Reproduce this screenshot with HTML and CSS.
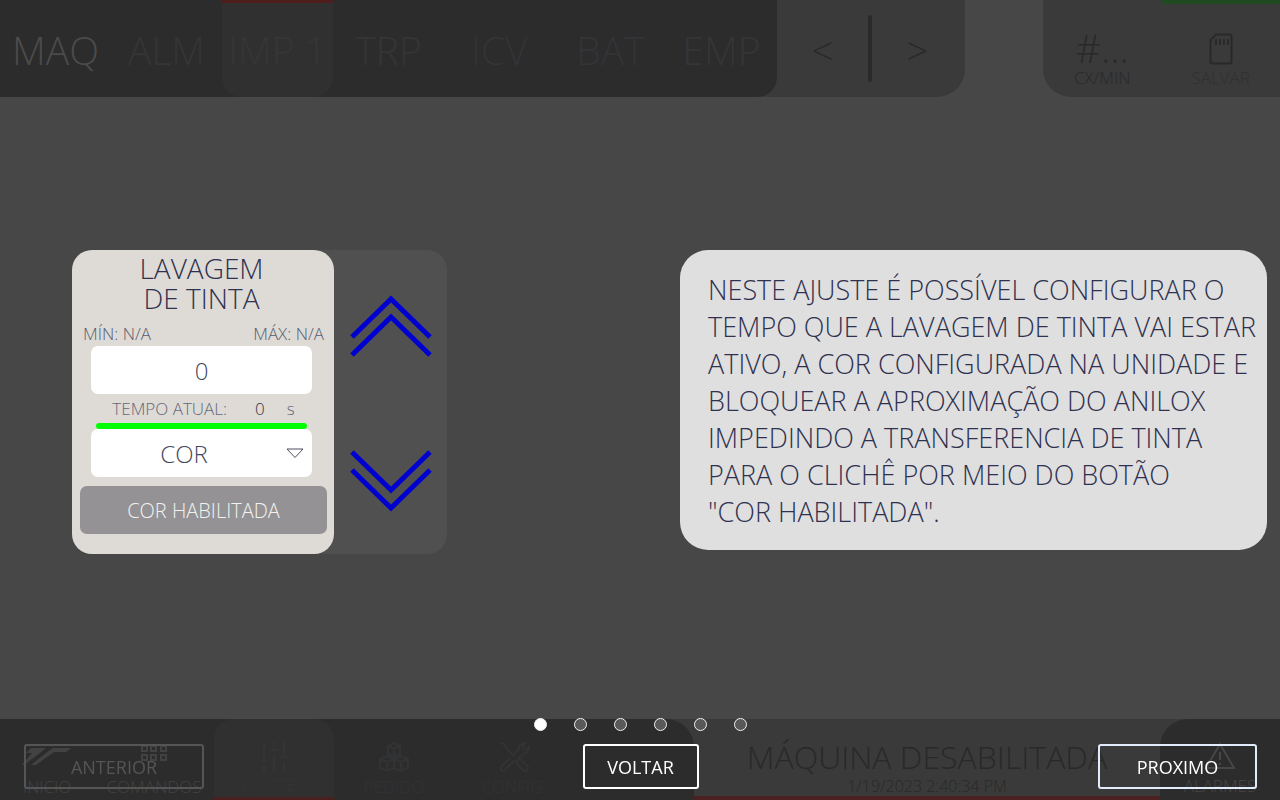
FILE: index.html
```html
<!DOCTYPE html>
<html lang="pt-BR">
<head>
<meta charset="utf-8">
<title>Lavagem de tinta</title>
<link rel="stylesheet" href="styles.css">
</head>
<body>
<div class="app">
  <header class="top">
    <nav class="tabs-wrap">
      <div class="tabs">
        <button class="tab tab-first" type="button">MAQ</button>
        <button class="tab" type="button">ALM</button>
        <button class="tab tab-active" type="button">IMP 1</button>
        <button class="tab" type="button">TRP</button>
        <button class="tab tab-blue" type="button">ICV</button>
        <button class="tab tab-blue" type="button">BAT</button>
        <button class="tab" type="button">EMP</button>
      </div>
      <div class="pager">
        <button class="pager-btn" type="button">&lt;</button>
        <span class="pager-bar"></span>
        <button class="pager-btn" type="button">&gt;</button>
      </div>
    </nav>
    <div class="status">
      <div class="stat"><span class="stat-value">#...</span><span class="stat-label">CX/MIN</span></div>
      <button class="stat stat-save" type="button">
        <svg class="sd" viewBox="0 0 24 32"><path d="M7 1.5H20.500Q22.500 1.500 22.500 3.500V28.500Q22.500 30.500 20.500 30.500H3.500Q1.500 30.500 1.500 28.500V7Z"/><path d="M7 6v6M11 6v6M15 6v6M19 6v6"/></svg>
        <span class="stat-label">SALVAR</span>
      </button>
    </div>
  </header>

  <main class="main">
    <section class="control">
      <div class="card">
        <div class="settings">
          <h1 class="card-title">LAVAGEM<br>DE TINTA</h1>
          <div class="limits"><span>MÍN: N/A</span><span>MÁX: N/A</span></div>
          <input class="field" type="text" value="0" aria-label="Tempo de lavagem">
          <div class="current"><span>TEMPO ATUAL:</span><span class="current-value">0</span><span>s</span></div>
          <div class="progress"></div>
          <div class="select-wrap">
            <select class="field select" aria-label="Cor"><option>COR</option></select>
            <svg class="caret" viewBox="0 0 18 11"><path d="M1 1H17L9 9.500Z"/></svg>
          </div>
        </div>
        <button class="enable" type="button">COR HABILITADA</button>
      </div>
      <div class="steppers">
        <button class="step" type="button" aria-label="Aumentar"><svg viewBox="0 0 82 62"><path d="M2 42L41 4L80 42M2 60L41 22L80 60"/></svg></button>
        <button class="step" type="button" aria-label="Diminuir"><svg viewBox="0 0 82 62"><path d="M2 2L41 40L80 2M2 20L41 58L80 20"/></svg></button>
      </div>
    </section>
    <p class="help">NESTE AJUSTE É POSSÍVEL CONFIGURAR O TEMPO QUE A LAVAGEM DE TINTA VAI ESTAR ATIVO, A COR CONFIGURADA NA UNIDADE E BLOQUEAR A APROXIMAÇÃO DO ANILOX IMPEDINDO A TRANSFERENCIA DE TINTA PARA O CLICHÊ POR MEIO DO BOTÃO <br>"COR HABILITADA".</p>
  </main>

  <footer class="bottom">
    <nav class="menu">
      <a class="item item-lit" href="#"><svg class="logo" viewBox="0 0 50 20"><path d="M9 2H24L18 7L2 19H0L10 7H4ZM31 2H49L44 6H32L14 19H9L24 7Z"/></svg><span>INICIO</span></a>
      <a class="item item-lit" href="#"><svg class="icon" viewBox="0 0 32 32"><path d="M4 5h5v5h-5zM13 5h5v5h-5zM23 5h5v5h-5zM4 14h5v5h-5zM13 14h5v5h-5zM23 14h5v5h-5z"/></svg><span>COMANDOS</span></a>
      <a class="item item-active" href="#"><svg class="icon" viewBox="0 0 32 32"><path d="M6 1v18M6 24v7M16 1v8M16 14v17M26 1v15M26 21v10M2 19h8M12 9h8M22 16h8"/></svg><span>AJUSTES</span></a>
      <a class="item" href="#"><svg class="icon" viewBox="0 0 32 32"><path d="M10 5l6-3l6 3v8l-6 3l-6-3zM10 5l6 3l6-3M16 8v8M2 18l7-3l7 3v9l-7 3l-7-3zM2 18l7 3l7-3M9 21v9M16 18l7-3l7 3v9l-7 3l-7-3M16 18l7 3l7-3M23 21v9"/></svg><span>PEDIDO</span></a>
      <a class="item" href="#"><svg class="icon" viewBox="0 0 32 32"><path d="M2 2l4 1l3 5l8 8M12 17l-9 9q-1 4 3 4L17 19M16 13l5-5q-1-5 6-6l-3 4l3 3l4-3q0 6-6 7l-5 5M19 20l3-2l8 8q0 4-4 4l-7-7z"/></svg><span>CONFIG.</span></a>
    </nav>
    <div class="machine"><span class="machine-state">MÁQUINA DESABILITADA</span><time class="machine-time">1/19/2023 2:40:34 PM</time></div>
    <a class="item item-alarm" href="#"><svg class="icon" viewBox="0 0 32 32"><path d="M16 3L30 27H2ZM16 11v8M16 22v2"/></svg><span>ALARMES</span></a>
  </footer>
</div>

<div class="tour">
  <div class="dots"><span class="dot dot-on"></span><span class="dot"></span><span class="dot"></span><span class="dot"></span><span class="dot"></span><span class="dot"></span></div>
  <div class="tour-nav">
    <button class="tour-btn prev" type="button" disabled>ANTERIOR</button>
    <button class="tour-btn back" type="button">VOLTAR</button>
    <button class="tour-btn next" type="button">PROXIMO</button>
  </div>
</div>
</body>
</html>
```
FILE: styles.css
```css
* { box-sizing: border-box; }
body { margin: 0; background: #474747; font-family: "Open Sans", sans-serif; font-weight: 300; }
button, input, select { font: inherit; color: inherit; border: 0; padding: 0; background: none; }
a { color: inherit; text-decoration: none; }
svg { fill: none; stroke: currentColor; stroke-width: 2; display: block; }

.app { min-height: 100vh; display: grid; grid-template-rows: auto 1fr auto; }

.top { display: flex; justify-content: space-between; height: 97px; }
.tabs-wrap { display: flex; background: #3a3a3a; border-radius: 0 0 28px 0; }
.tabs { display: flex; background: #2c2c2c; border-radius: 0 0 20px 0; }
.tab { width: 111px; padding-top: 2px; font-size: 39px; color: #343536; white-space: nowrap; }
.tab-first { color: #4b4b4b; }
.tab-blue { color: #323437; }
.tab-active { padding: 0 0 1px; background: #303030; border-top: 3px solid #4f1e1c; border-radius: 0 0 20px 20px; color: #353637; }
.pager { display: flex; align-items: center; width: 188px; padding-right: 2px; color: #2a2a2a; }
.pager-btn { flex: 1; padding-top: 2px; font-size: 39px; }
.pager-bar { width: 4px; height: 67px; background: #2a2a2a; border-radius: 2px; }
.status { display: flex; width: 237px; background: #3a3a3a; border-radius: 0 0 0 28px; color: #292929; overflow: hidden; }
.stat { flex: 1; display: flex; flex-direction: column; align-items: center; justify-content: flex-end; padding-bottom: 7px; }
.stat-save { border-top: 4px solid #204a20; }
.stat-value { font-size: 39px; line-height: 36px; }
.stat-label { font-size: 17px; line-height: 24px; }
.stat-save .stat-label { color: #303030; }
.sd { width: 24px; height: 32px; margin-bottom: 1px; }

.main { display: flex; justify-content: space-between; align-items: flex-start; padding: 153px 13px 0 72px; }
.control { display: flex; background: #505050; border-radius: 20px; }
.card { width: 262px; padding: 3px 7px 20px 8px; background: #dedbd6; border-radius: 20px; color: #2f3150; }
.settings { display: flex; flex-direction: column; align-items: center; padding-right: 4px; }
.card-title { margin: 0; font-size: 28px; line-height: 30px; font-weight: 300; text-align: center; }
.limits { align-self: stretch; display: flex; justify-content: space-between; margin: 9px -1px 0 3px; font-size: 17px; line-height: 24px; color: #5b5c70; }
.field { width: 221px; height: 48px; background: #fff; border-radius: 7px; font-size: 24px; text-align: center; color: #44475c; }
.current { display: flex; gap: 28px; height: 29px; padding-left: 4px; font-size: 17px; line-height: 30px; color: #66677a; }
.current > :last-child { margin-left: -6px; }
.current-value { color: #33343c; }
.progress { width: 211px; height: 6px; background: #00ff00; border-radius: 3px; }
.select-wrap { display: grid; align-items: center; }
.select-wrap > * { grid-area: 1 / 1; }
.select { appearance: none; padding: 0 35px 0 0; text-align-last: center; }
.caret { width: 18px; height: 11px; justify-self: end; margin-right: 8px; pointer-events: none; color: #4c4d5c; stroke-width: 1; }
.enable { display: block; width: 100%; height: 48px; margin-top: 9px; background: #949294; border-radius: 7px; color: #f2f2f2; font-size: 20px; }
.steppers { display: flex; flex-direction: column; justify-content: space-between; padding: 45px 15px 42px 16px; }
.step { color: #0000d0; }
.step svg { width: 82px; height: 62px; stroke-width: 5; }
.help { flex: 0 0 587px; margin: 0; padding: 21px 8px 20px 28px; background: #dfdfdf; border-radius: 28px; color: #2f3150; font-size: 27px; line-height: 37px; }

.bottom { display: flex; height: 81px; background: #3a3a3a; color: #323334; }
.menu { display: grid; grid-template-columns: 94px repeat(5, 120px); background: #2c2c2c; border-radius: 0 28px 0 0; }
.item { display: flex; flex-direction: column; align-items: center; justify-content: space-between; padding: 22px 0 2px; font-size: 17px; line-height: 24px; }
.item-lit { color: #424242; }
.item-active { background: #303030; border-bottom: 4px solid #4b2020; border-radius: 20px 20px 0 0; padding-bottom: 0; color: #343434; }
.icon { width: 32px; height: 32px; }
.logo { width: 50px; height: 20px; margin-top: 5px; fill: currentColor; stroke: none; }
.machine { flex: 1; display: flex; flex-direction: column; align-items: center; padding-top: 18px; border-bottom: 4px solid #4b2020; color: #292929; }
.machine-state { font-size: 32px; line-height: 40px; white-space: nowrap; }
.machine-time { font-size: 16px; line-height: 19px; }
.item-alarm { width: 120px; background: #2c2c2c; border-radius: 28px 0 0 0; color: #464646; }

.tour { position: fixed; left: 0; right: 0; bottom: 11px; }
.dots { display: flex; justify-content: center; gap: 27px; margin-bottom: 13px; }
.dot { width: 13px; height: 13px; border: 1px solid #f0f0f0; border-radius: 50%; background: #595959; }
.dot-on { background: #fff; }
.tour-nav { display: grid; grid-template-columns: 1fr auto 1fr; padding: 0 23px 0 24px; font-size: 18px; font-weight: 400; }
.tour-btn { height: 45px; border: 2px solid; border-radius: 3px; color: #fff; }
.prev { width: 180px; color: #555; }
.back { width: 116px; background: #2c2c2c; }
.next { width: 159px; justify-self: end; border-color: #e2ebfa; }
```
